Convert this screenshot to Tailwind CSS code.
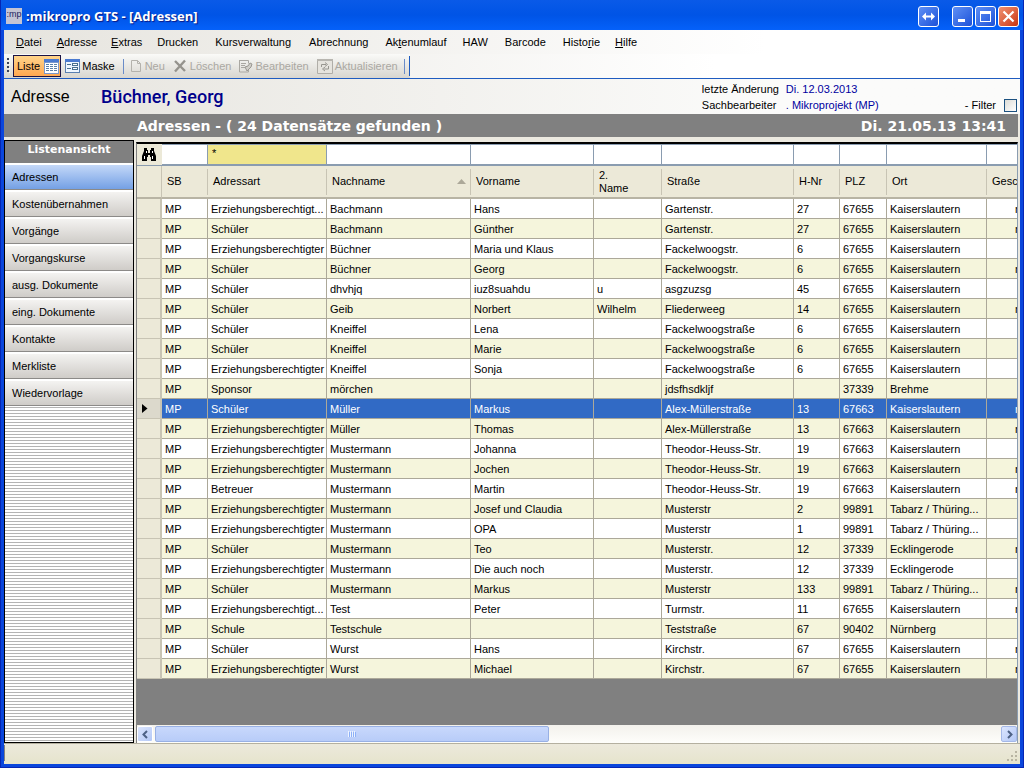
<!DOCTYPE html>
<html lang="de">
<head>
<meta charset="utf-8">
<title>:mikropro GTS - [Adressen]</title>
<script src="https://cdn.jsdelivr.net/npm/@tailwindcss/browser@4"></script>
</head>
<body class="font-['Liberation_Sans',sans-serif] text-[11px] leading-[13px] text-black">
<div class="flex h-screen min-h-[720px] flex-col overflow-hidden border-x border-b border-[#0626b4] bg-[#0a46dc]">

  <!-- Title bar -->
  <header class="flex h-[30px] shrink-0 items-center bg-linear-to-b from-[#0a5ae8] via-[#0054e6] to-[#0561fa] pt-[2px] pr-1 pl-[5px]">
    <div class="flex h-4 w-4 items-start justify-center overflow-hidden bg-[#c4c4d4] text-[9px] leading-[13px] text-[#1c1c60]">:mp</div>
    <h1 class="ml-1 font-['Open_Sans',sans-serif] text-[13px] leading-4 font-bold text-white [text-shadow:1px_1px_1px_#0a1883]">:mikropro GTS - [Adressen]</h1>
    <div class="ml-auto flex gap-[2px]">
      <button aria-label="Verschieben" class="mr-[11px] flex size-[21px] items-center justify-center rounded-[3px] border border-white bg-linear-to-br from-[#5f8ff5] to-[#1c50d8]">
        <svg width="15" height="11" viewBox="0 0 15 11"><path d="M1 5.5 5 1.5V4.5H10V1.5L14 5.5 10 9.500V6.500H5V9.500Z" fill="#fff"/></svg>
      </button>
      <button aria-label="Minimieren" class="flex size-[21px] items-center justify-center rounded-[3px] border border-white bg-linear-to-br from-[#5f8ff5] to-[#1c50d8]">
        <svg width="15" height="15" viewBox="0 0 15 15"><path d="M3 10h7v3H3z" fill="#fff"/></svg>
      </button>
      <button aria-label="Maximieren" class="flex size-[21px] items-center justify-center rounded-[3px] border border-white bg-linear-to-br from-[#5f8ff5] to-[#1c50d8]">
        <svg width="15" height="15" viewBox="0 0 15 15"><path d="M2 2h11v11H2zM3 5v7h9V5z" fill="#fff" fill-rule="evenodd"/></svg>
      </button>
      <button aria-label="Schließen" class="flex size-[21px] items-center justify-center rounded-[3px] border border-white bg-linear-to-br from-[#f09070] to-[#c83208]">
        <svg width="15" height="15" viewBox="0 0 15 15"><path d="M2.500 2.500l10 10M12.500 2.500l-10 10" stroke="#fff" stroke-width="2.200"/></svg>
      </button>
    </div>
  </header>

  <div class="mx-[3px] mb-[3px] flex min-h-0 flex-1 flex-col bg-[#ece9e0]">

    <!-- Menu bar -->
    <nav class="flex h-6 shrink-0 items-center bg-linear-to-r from-[#e6e4de] to-white to-75% pl-1">
      <button class="px-2"><u>D</u>atei</button>
      <button class="px-[7px]"><u>A</u>dresse</button>
      <button class="px-[7px]"><u>E</u>xtras</button>
      <button class="px-2">Drucken</button>
      <button class="px-[9px]">Kursverwaltung</button>
      <button class="px-[9px]">Abrechnung</button>
      <button class="px-2">Ak<u>t</u>enumlauf</button>
      <button class="px-2">HAW</button>
      <button class="px-[9px]">Barcode</button>
      <button class="px-2">Histo<u>r</u>ie</button>
      <button class="px-[7px]"><u>H</u>ilfe</button>
    </nav>

    <!-- Toolbar -->
    <div class="flex h-[25px] shrink-0 border-b border-[#1f5cc0] bg-linear-to-r from-[#e6e4de] to-white to-70%">
      <div class="flex items-center bg-linear-to-b from-[#fafaf8] to-[#d8d6d0] pl-[3px]">
        <svg width="4" height="16" viewBox="0 0 4 16"><path d="M0 0h2v2H0zM0 4h2v2H0zM0 8h2v2H0zM0 12h2v2H0z" fill="#3a4258"/><path d="M2 2h1v1H2zM2 6h1v1H2zM2 10h1v1H2zM2 14h1v1H2z" fill="#fff"/></svg>
        <button class="ml-[2px] flex h-[22px] items-center gap-1 border border-[#1c1444] bg-linear-to-b from-[#ffd48a] to-[#ffa850] pr-px pl-[3px]">Liste
          <svg width="15" height="15" viewBox="0 0 15 15"><path d="M0 0h15v15H0z" fill="#7a98cc"/><path d="M0 0h15v3H0z" fill="#4a7ad0"/><path d="M1 4h13v10H1z" fill="#fff"/><path d="M2 5h3v1H2zM6 5h3v1H6zM10 5h3v1h-3zM2 7h3v1H2zM6 7h3v1H6zM10 7h3v1h-3zM2 9h3v1H2zM6 9h3v1H6zM10 9h3v1h-3zM2 11h3v1H2zM6 11h3v1H6zM10 11h3v1h-3z" fill="#5a80a8"/></svg>
        </button>
        <button class="ml-1 flex items-center gap-[2px]">
          <svg width="15" height="14" viewBox="0 0 15 14"><path d="M0 0h15v14H0z" fill="#5a80b0"/><path d="M0 0h15v3H0z" fill="#4a7ad0"/><path d="M1 3h13v10H1z" fill="#eef6ff"/><path d="M2 5h4v1H2zM2 9h4v1H2zM7 4h6v3H7zM7 8h6v3H7z" fill="#4a7090"/><path d="M8 5h4v1H8zM8 9h4v1H8z" fill="#fff"/></svg>
          Maske
        </button>
        <div class="mr-[6px] ml-2 h-[15px] w-px bg-[#6a8cc8]"></div>
        <button disabled class="flex items-center gap-[3px] text-[#aaa8a2]">
          <svg width="12" height="14" viewBox="0 0 12 14"><path d="M1.500 1.500h6l3 3v8h-9zM7.500 1.500v3h3" fill="none" stroke="#b4b2ac"/></svg>
          Neu
        </button>
        <button disabled class="ml-2 flex items-center gap-[3px] text-[#aaa8a2]">
          <svg width="14" height="14" viewBox="0 0 14 14"><path d="M2 2l10 10M12 1.500L2 12.500" stroke="#95938d" stroke-width="2.400"/></svg>
          Löschen
        </button>
        <button disabled class="ml-2 flex items-center gap-[2px] text-[#aaa8a2]">
          <svg width="14" height="14" viewBox="0 0 14 14"><path d="M.5 1.500h9v3M.5 1v12h9V11M2 4.500h5M2 6.500h4M2 8.500h4" fill="none" stroke="#aaa8a2"/><path d="M6 8l3-1 2-3 2 1-1 3-4 4z" fill="#d0cec8" stroke="#9a9892"/></svg>
          Bearbeiten
        </button>
        <button disabled class="ml-2 flex items-center gap-[2px] text-[#aaa8a2]">
          <svg width="16" height="15" viewBox="0 0 16 15"><path d="M.5.5h15v14H.5z" fill="#e6e4de" stroke="#b0aea8"/><path d="M0 0h16v2H0z" fill="#b8b6b0"/><path d="M4.500 8V5.500H9M8 3.500l2.500 2L8 7.500M11.500 7v3H7M8 8l-2.500 2L8 12" fill="none" stroke="#989690"/></svg>
          Aktualisieren
        </button>
        <div class="ml-[6px] h-[15px] w-px bg-[#6a8cc8]"></div>
        <div class="ml-[4px] h-[20px] w-px bg-[#1f5cc0]"></div>
      </div>
    </div>

    <!-- Record header -->
    <section class="flex h-[35px] shrink-0 items-center bg-linear-to-r from-[#e6e4de] to-[#fbfbfa] to-75% pr-[3px] pl-[7px]">
      <div class="w-[90px] text-[16px] leading-5">Adresse</div>
      <div class="font-['Roboto',sans-serif] text-[18px] leading-5 font-medium text-[#00008b]">Büchner, Georg</div>
      <dl class="ml-auto grid w-[263px] grid-cols-[84px_1fr] leading-4">
        <dt>letzte Änderung</dt><dd class="text-[#0000a0]">Di. 12.03.2013</dd>
        <dt>Sachbearbeiter</dt><dd class="text-[#0000a0]">. Mikroprojekt (MP)</dd>
      </dl>
      <label class="flex items-center gap-2 self-end pb-[2px]">- Filter
        <input type="checkbox" class="size-[13px] appearance-none border border-[#1c5180] bg-linear-to-br from-[#dcdcd7] to-white">
      </label>
    </section>

    <!-- Result banner -->
    <div class="mr-[2px] flex h-[23px] shrink-0 items-center justify-between bg-[#808080] pr-3 pl-[133px] font-['DejaVu_Sans',sans-serif] text-[14px] leading-4 font-bold text-white">
      <h2>Adressen - ( 24 Datensätze gefunden )</h2>
      <span>Di. 21.05.13 13:41</span>
    </div>

    <main class="mt-[3px] flex min-h-0 flex-1">

      <!-- Side navigation -->
      <aside class="flex w-[130px] shrink-0 flex-col border border-black bg-[repeating-linear-gradient(to_bottom,#fff_0px,#fff_2px,#b4b4b4_2px,#b4b4b4_3px)]">
        <h3 class="h-[22px] bg-[#808080] pt-px text-center font-['DejaVu_Sans',sans-serif] text-[11px] leading-4 font-bold text-white">Listenansicht</h3>
        <nav id="views" class="flex flex-col"></nav>
      </aside>

      <!-- Address grid -->
      <section class="mt-[2px] mr-[2px] ml-[2px] flex min-w-0 flex-1 flex-col border-t-2 border-r border-l border-t-black border-r-[#8a9cb0] border-l-[#808080] bg-[#808080]">
        <div class="min-h-0 flex-1 overflow-hidden">
          <table class="w-[930px] table-fixed border-separate border-spacing-0">
            <colgroup>
              <col class="w-[25px]"><col class="w-[46px]"><col class="w-[119px]"><col class="w-[144px]"><col class="w-[123px]"><col class="w-[68px]"><col class="w-[132px]"><col class="w-[46px]"><col class="w-[47px]"><col class="w-[100px]"><col class="w-[80px]">
            </colgroup>
            <thead>
              <tr id="filters" class="h-[22px]">
                <td class="border-b border-[#8a9cb0] bg-[#ece9d8] p-0">
                  <button aria-label="Suchen" class="flex h-5 w-6 items-center justify-center">
                    <svg width="16" height="14" viewBox="0 0 16 14"><path d="M3 0h3v2h1v3h2V2h1V0h3v3l2 5v5h-5V9H9V7H7v2H6v4H1V8l2-5z"/><path d="M3 8h1v3H3zM11 8h1v3h-1zM5 3h1v2H5zM11 3h1v2h-1z" fill="#fff"/></svg>
                  </button>
                </td>
              </tr>
              <tr id="heads" class="h-[33px]"></tr>
            </thead>
            <tbody id="rows"></tbody>
          </table>
        </div>

        <!-- Horizontal scroll bar -->
        <div class="flex h-[18px] shrink-0 items-center bg-linear-to-b from-[#f3f1ec] to-[#fefefb]">
          <button aria-label="Nach links" class="flex h-4 w-4 items-center justify-center rounded-[2px] border border-white bg-linear-to-br from-[#dce6fe] to-[#b4c8f6]">
            <svg width="9" height="9" viewBox="0 0 9 9"><path d="M6 1 2.500 4.500 6 8" fill="none" stroke="#4d6185" stroke-width="2"/></svg>
          </button>
          <div class="flex h-4 flex-1">
            <button aria-label="Bildlauf" class="ml-[2px] flex w-[46.500%] items-center justify-center rounded-[2px] border border-[#98b0e4] bg-linear-to-b from-[#c8d8fc] to-[#b8ccf8]">
              <svg width="8" height="6" viewBox="0 0 8 6"><path d="M0 0h1v6H0zM2 0h1v6H2zM4 0h1v6H4zM6 0h1v6H6z" fill="#eef4fe"/><path d="M1 1h1v5H1zM3 1h1v5H3zM5 1h1v5H5zM7 1h1v5H7z" fill="#8cb0f8"/></svg>
            </button>
          </div>
          <button aria-label="Nach rechts" class="flex h-4 w-4 items-center justify-center rounded-[2px] border border-[#a4b8e8] bg-linear-to-br from-[#dce6fe] to-[#b4c8f6]">
            <svg width="9" height="9" viewBox="0 0 9 9"><path d="M3 1 6.500 4.500 3 8" fill="none" stroke="#4d6185" stroke-width="2"/></svg>
          </button>
        </div>
      </section>
    </main>

    <!-- Status bar -->
    <footer class="flex h-[21px] shrink-0 items-end justify-between border-t border-[#b4b0a0] bg-linear-to-b from-[#ece9dc] to-[#e6e4cc] pb-[2px]">
      <div class="mb-px h-4 w-px bg-[#808080]"></div>
      <svg width="13" height="12" viewBox="0 0 13 12"><path d="M8 1h2v2H8zM4 5h2v2H4zM8 5h2v2H8zM0 9h2v2H0zM4 9h2v2H4zM8 9h2v2H8z" fill="#b8b4a2"/></svg>
    </footer>
  </div>
</div>

<script>
const views = ['Adressen', 'Kostenübernahmen', 'Vorgänge', 'Vorgangskurse', 'ausg. Dokumente', 'eing. Dokumente', 'Kontakte', 'Merkliste', 'Wiedervorlage'];
const viewBase = 'h-[27px] border-t-2 border-b border-t-white border-b-[#8c8a88] pl-[7px] text-left ';
document.getElementById('views').innerHTML = views.map((v, i) =>
  `<button class="${viewBase}${i === 0 ? 'bg-linear-to-b from-[#c4d8f8] to-[#74a0e4]' : 'bg-linear-to-b from-[#f4f3f1] to-[#cfccc8]'}">${v}</button>`).join('');

const heads = ['SB', 'Adressart', 'Nachname', 'Vorname', '2.<br>Name', 'Straße', 'H-Nr', 'PLZ', 'Ort', 'Geschlecht'];
document.getElementById('filters').insertAdjacentHTML('beforeend', heads.map((h, i) =>
  `<td class="p-0"><input aria-label="Filter ${h.replace('<br>', ' ')}" value="${i === 1 ? '*' : ''}" class="${i === 1 ? 'bg-[#f0e68c]' : 'bg-white'} block h-[22px] w-full border-t border-r border-b-2 border-[#8a9cb0] pb-1 pl-1"></td>`).join(''));
const arrow = '<svg class="ml-auto" width="9" height="5" viewBox="0 0 9 5"><path d="M4.500 0 9 5H0z" fill="#aca899"/></svg>';
document.getElementById('heads').innerHTML =
  '<td class="border-r border-b-2 border-r-[#c8c4b4] border-b-[#b8b4a4] bg-[#ece9d8]"></td>' +
  heads.map((h, i) => `<th scope="col" class="border-b-2 border-[#b8b4a4] bg-[#ece9d8] p-0 text-left font-normal"><div class="flex h-[26px] items-center border-r border-[#c8c4b4] pr-1 pl-[5px]"><span>${h}</span>${i === 2 ? arrow : ''}</div></th>`).join('');

const E = 'Erziehungsberechtigter', EA = 'Erziehungsberechtigt...', K = 'Kaiserslautern', F = 'Fackelwoogstraße', M = 'Mustermann', T = 'Theodor-Heuss-Str.', TT = 'Tabarz / Thüring...';
const data = [
  [EA, 'Bachmann', 'Hans', '', 'Gartenstr.', '27', '67655', K, 'm'],
  ['Schüler', 'Bachmann', 'Günther', '', 'Gartenstr.', '27', '67655', K, 'm'],
  [E, 'Büchner', 'Maria und Klaus', '', 'Fackelwoogstr.', '6', '67655', K, ''],
  ['Schüler', 'Büchner', 'Georg', '', 'Fackelwoogstr.', '6', '67655', K, 'm'],
  ['Schüler', 'dhvhjq', 'iuz8suahdu', 'u', 'asgzuzsg', '45', '67655', K, ''],
  ['Schüler', 'Geib', 'Norbert', 'Wilhelm', 'Fliederweeg', '14', '67655', K, 'm'],
  ['Schüler', 'Kneiffel', 'Lena', '', F, '6', '67655', K, ''],
  ['Schüler', 'Kneiffel', 'Marie', '', F, '6', '67655', K, ''],
  [E, 'Kneiffel', 'Sonja', '', F, '6', '67655', K, ''],
  ['Sponsor', 'mörchen', '', '', 'jdsfhsdkljf', '', '37339', 'Brehme', ''],
  ['Schüler', 'Müller', 'Markus', '', 'Alex-Müllerstraße', '13', '67663', K, 'm'],
  [E, 'Müller', 'Thomas', '', 'Alex-Müllerstraße', '13', '67663', K, 'm'],
  [E, M, 'Johanna', '', T, '19', '67663', K, ''],
  [E, M, 'Jochen', '', T, '19', '67663', K, 'm'],
  ['Betreuer', M, 'Martin', '', T, '19', '67663', K, 'm'],
  [E, M, 'Josef und Claudia', '', 'Musterstr', '2', '99891', TT, ''],
  [E, M, 'OPA', '', 'Musterstr', '1', '99891', TT, ''],
  ['Schüler', M, 'Teo', '', 'Musterstr.', '12', '37339', 'Ecklingerode', 'm'],
  [E, M, 'Die auch noch', '', 'Musterstr.', '12', '37339', 'Ecklingerode', ''],
  ['Schüler', M, 'Markus', '', 'Musterstr', '133', '99891', TT, 'm'],
  [EA, 'Test', 'Peter', '', 'Turmstr.', '11', '67655', K, 'm'],
  ['Schule', 'Testschule', '', '', 'Teststraße', '67', '90402', 'Nürnberg', ''],
  ['Schüler', 'Wurst', 'Hans', '', 'Kirchstr.', '67', '67655', K, 'm'],
  [E, 'Wurst', 'Michael', '', 'Kirchstr.', '67', '67655', K, 'm']
];
const marker = '<svg class="ml-[5px]" width="6" height="9" viewBox="0 0 6 9"><path d="M0 0 5.500 4.500 0 9z"/></svg>';
document.getElementById('rows').innerHTML = data.map((r, i) => {
  const on = i === 10;
  const tone = on ? 'bg-[#316ac5] text-white' : i % 2 ? 'bg-[#f5f5dc]' : 'bg-white';
  const cells = ['MP', ...r.slice(0, 8)].map(c => `<td class="overflow-hidden border-r border-b border-[#aca899] pt-px pr-0 pb-0 pl-[3px] whitespace-nowrap">${c}</td>`).join('');
  return `<tr class="h-5 ${tone}"><td class="border-r-2 border-b border-r-[#c8c4b4] border-b-[#c8c4b4] p-0 ${on ? 'bg-[#dcd9cc]' : 'bg-[#ece9d8]'}">${on ? marker : ''}</td>${cells}<td class="border-b border-[#aca899] pt-px pb-0 pl-7">${r[8]}</td></tr>`;
}).join('');
</script>
</body>
</html>
